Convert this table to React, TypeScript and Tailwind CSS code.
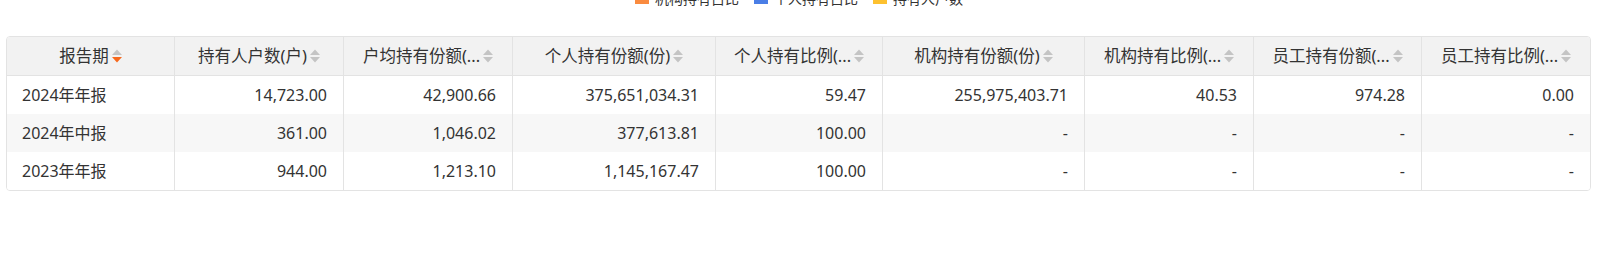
import React from "react";

interface HolderRow {
  period: string;
  values: string[];
}

// header labels as the grid shows them (long ones are clipped by the column)
const COLUMNS = [
  "报告期",
  "持有人户数(户)",
  "户均持有份额(...",
  "个人持有份额(份)",
  "个人持有比例(...",
  "机构持有份额(份)",
  "机构持有比例(...",
  "员工持有份额(...",
  "员工持有比例(...",
];

const ROWS: HolderRow[] = [
  {
    period: "2024年年报",
    values: ["14,723.00", "42,900.66", "375,651,034.31", "59.47", "255,975,403.71", "40.53", "974.28", "0.00"],
  },
  {
    period: "2024年中报",
    values: ["361.00", "1,046.02", "377,613.81", "100.00", "-", "-", "-", "-"],
  },
  {
    period: "2023年年报",
    values: ["944.00", "1,213.10", "1,145,167.47", "100.00", "-", "-", "-", "-"],
  },
];

const LEGEND = [
  { label: "机构持有占比", color: "bg-[#fa8b3f]" },
  { label: "个人持有占比", color: "bg-[#4a7ee6]" },
  { label: "持有人户数", color: "bg-[#fdc12f]" },
];

function SortIcon({ active }: { active?: boolean }) {
  return (
    <svg width="10" height="14" viewBox="0 0 10 14" className="shrink-0 ml-[3px]">
      <polygon points="0,6 5,0.5 10,6" fill="#c4c4c4" />
      <polygon points="0,8 10,8 5,13.5" fill={active ? "#f7681c" : "#c4c4c4"} />
    </svg>
  );
}

export default function App() {
  const grid =
    "grid grid-cols-[167px_169px_169px_203px_167px_202px_169px_168px_169px]";

  return (
    <div
      className="w-[1604px] h-[255px] bg-white text-[#333] overflow-hidden"
      style={{ fontFamily: '"Noto Sans", "Noto Sans CJK SC", sans-serif' }}
    >
      {/* Legend, clipped by the top of the frame */}
      <div className="flex justify-center items-center gap-[15px] h-[14px] mt-[-8px] pr-[6px] text-[14px] leading-[14px] text-[#333]">
        {LEGEND.map((item) => (
          <div key={item.label} className="flex items-center gap-[6px]">
            <span className={`w-[14px] h-[10px] ${item.color}`} />
            <span>{item.label}</span>
          </div>
        ))}
      </div>

      {/* Table */}
      <div className="ml-[6px] mt-[30px] w-[1585px] border border-[#e3e3e3] rounded-[4px] overflow-hidden text-[16px]">
        <div className={`${grid} h-[39px] bg-[#f2f2f2] border-b border-[#e3e3e3] text-[16.5px]`}>
          {COLUMNS.map((col, i) => (
            <div
              key={col}
              className={`flex items-center justify-center px-[15px] min-w-0 ${i > 0 ? "border-l border-[#e3e3e3]" : ""}`}
            >
              <span className="whitespace-nowrap">{col}</span>
              <SortIcon active={i === 0} />
            </div>
          ))}
        </div>

        {ROWS.map((row, r) => (
          <div key={row.period} className={`${grid} h-[38px] ${r % 2 === 1 ? "bg-[#f7f7f7]" : "bg-white"}`}>
            <div className="flex items-center px-[15px]">{row.period}</div>
            {row.values.map((v, i) => (
              <div key={i} className="flex items-center justify-end px-[16px] border-l border-[#e3e3e3]">
                {v}
              </div>
            ))}
          </div>
        ))}
      </div>
    </div>
  );
}
